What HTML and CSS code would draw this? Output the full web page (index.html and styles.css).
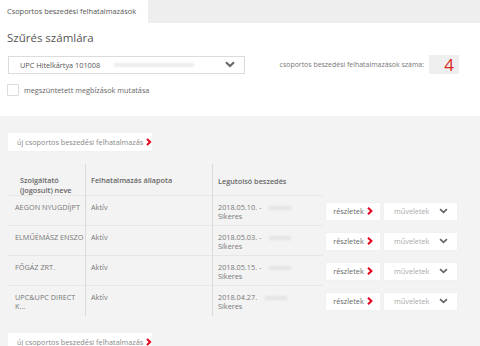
FILE: index.html
```html
<!DOCTYPE html>
<html lang="hu">
<head>
<meta charset="utf-8">
<link rel="stylesheet" href="styles.css">
</head>
<body>
<div class="tabs"><div class="tab">Csoportos beszedési felhatalmazások</div></div>
<section class="filter">
  <h2 class="title">Szűrés számlára</h2>
  <div class="filter-row">
    <div class="select">
      <span class="select-text">UPC Hitelkártya 101008<span class="blur wide"></span></span>
      <svg class="chev" width="10" height="7" viewBox="0 0 10 7"><path d="M1 1.2 L5 5 L9 1.2" fill="none" stroke="#666" stroke-width="2"/></svg>
    </div>
    <div class="count">
      <span class="count-label">csoportos beszedési felhatalmazások száma:</span>
      <span class="count-box">4</span>
    </div>
  </div>
  <label class="check"><span class="box"></span>megszüntetett megbízások mutatása</label>
</section>
<section class="list">
  <button class="new">új csoportos beszedési felhatalmazás <svg class="arr" width="6" height="8" viewBox="0 0 6 8"><path d="M1 0.8 L4.4 4 L1 7.2" fill="none" stroke="#e2001a" stroke-width="2"/></svg></button>
  <div class="table">
    <div class="tr head">
      <div class="c1">Szolgáltató<br>(jogosult) neve</div>
      <div class="c2">Felhatalmazás állapota</div>
      <div class="c3">Legutolsó beszedés</div>
      <div class="c4"></div>
    </div>
    <div class="tr">
      <div class="c1">AEGON NYUGDÍJPT</div>
      <div class="c2">Aktív</div>
      <div class="c3">2018.05.10. -<span class="blur"></span><br>Sikeres</div>
      <div class="c4 actions"><button class="btn det">részletek <svg class="arr" width="6" height="8" viewBox="0 0 6 8"><path d="M1 0.8 L4.4 4 L1 7.2" fill="none" stroke="#e2001a" stroke-width="2"/></svg></button><button class="btn ops"><span>műveletek</span><svg width="9" height="6" viewBox="0 0 10 7"><path d="M1 1.2 L5 5 L9 1.2" fill="none" stroke="#666" stroke-width="2"/></svg></button></div>
    </div>
    <div class="tr">
      <div class="c1">ELMŰÉMÁSZ ENSZO</div>
      <div class="c2">Aktív</div>
      <div class="c3">2018.05.03. -<span class="blur"></span><br>Sikeres</div>
      <div class="c4 actions"><button class="btn det">részletek <svg class="arr" width="6" height="8" viewBox="0 0 6 8"><path d="M1 0.8 L4.4 4 L1 7.2" fill="none" stroke="#e2001a" stroke-width="2"/></svg></button><button class="btn ops"><span>műveletek</span><svg width="9" height="6" viewBox="0 0 10 7"><path d="M1 1.2 L5 5 L9 1.2" fill="none" stroke="#666" stroke-width="2"/></svg></button></div>
    </div>
    <div class="tr">
      <div class="c1">FŐGÁZ ZRT.</div>
      <div class="c2">Aktív</div>
      <div class="c3">2018.05.15. -<span class="blur"></span><br>Sikeres</div>
      <div class="c4 actions"><button class="btn det">részletek <svg class="arr" width="6" height="8" viewBox="0 0 6 8"><path d="M1 0.8 L4.4 4 L1 7.2" fill="none" stroke="#e2001a" stroke-width="2"/></svg></button><button class="btn ops"><span>műveletek</span><svg width="9" height="6" viewBox="0 0 10 7"><path d="M1 1.2 L5 5 L9 1.2" fill="none" stroke="#666" stroke-width="2"/></svg></button></div>
    </div>
    <div class="tr last">
      <div class="c1">UPC&amp;UPC DIRECT<br>K...</div>
      <div class="c2">Aktív</div>
      <div class="c3">2018.04.27.<span class="blur"></span><br>Sikeres</div>
      <div class="c4 actions"><button class="btn det">részletek <svg class="arr" width="6" height="8" viewBox="0 0 6 8"><path d="M1 0.8 L4.4 4 L1 7.2" fill="none" stroke="#e2001a" stroke-width="2"/></svg></button><button class="btn ops"><span>műveletek</span><svg width="9" height="6" viewBox="0 0 10 7"><path d="M1 1.2 L5 5 L9 1.2" fill="none" stroke="#666" stroke-width="2"/></svg></button></div>
    </div>
  </div>
  <button class="new">új csoportos beszedési felhatalmazás <svg class="arr" width="6" height="8" viewBox="0 0 6 8"><path d="M1 0.8 L4.4 4 L1 7.2" fill="none" stroke="#e2001a" stroke-width="2"/></svg></button>
</section>
</body>
</html>
```

FILE: styles.css
```css
* { box-sizing: border-box; }
html, body { margin: 0; padding: 0; }
body {
  font-family: "Open Sans", "Noto Sans", sans-serif;
  font-size: 7.3px;
  color: #777;
  background: #f3f3f3;
  width: 480px;
  height: 346px;
  overflow: hidden;
}
.tabs { background: #eeeeee; height: 23px; display: flex; }
.tab {
  background: #fff;
  width: 148px;
  padding: 0 7px;
  line-height: 23px;
  font-size: 7.4px;
  color: #555;
  white-space: nowrap;
}
.filter { background: #fff; height: 93px; padding: 8px 8px 0 8px; }
.title { margin: 0 0 0 -1px; font-weight: 400; font-size: 11.5px; line-height: 14px; color: #555; }
.filter-row { display: flex; align-items: center; justify-content: space-between; margin-top: 10px; margin-right: 13px; }
.select {
  width: 237px; height: 18px;
  border: 1px solid #dcdcdc;
  display: flex; align-items: center; justify-content: space-between;
  padding: 0 9px 0 11px;
  color: #555;
}
.select-text { white-space: nowrap; display: flex; align-items: center; }
.blur {
  display: inline-block; width: 22px; height: 4px; margin-left: 8px;
  background: #e4e4e4; filter: blur(1.2px); vertical-align: middle;
}
.blur.wide { width: 80px; margin-left: 14px; background: #ececec; }
.chev { display: block; }
.count { display: flex; align-items: center; gap: 5px; }
.count-label { color: #777; font-size: 6.95px; }
.count-box {
  width: 30px; height: 19px; background: #efefef;
  color: #d9261c; font-size: 17px; line-height: 19px; text-align: right; padding-right: 5px;
}
.check { display: flex; align-items: center; gap: 5px; margin-top: 10px; margin-left: -1px; color: #666; }
.box { width: 12px; height: 12px; border: 1px solid #dcdcdc; background: #fff; border-radius: 1px; }
.list { padding: 17px 8px 0 8px; }
.new {
  display: flex; align-items: center; gap: 3px;
  height: 18px; width: 144px;
  border: 0; background: #fff;
  font-family: inherit; font-size: 7.3px; color: #888;
  padding: 0 0 0 9px; margin: 0; white-space: nowrap;
  box-shadow: 0 0 1px rgba(0,0,0,0.06);
}
.arr { display: block; }
.table { margin-top: 13px; margin-bottom: 17px; }
.tr { display: grid; grid-template-columns: 78px 127px 110px 137px; }
.tr > div { border-bottom: 1px solid #e6e6e6; height: 30px; padding-top: 7px; line-height: 9px; white-space: nowrap; }
.head > div { height: 32px; padding-top: 11px; font-weight: 600; color: #666; line-height: 10px; }
.tr > .c1 { padding-left: 7px; border-right: 1px solid #dadada; }
.head > .c1 { padding-left: 12px; }
.tr > .c2 { padding-left: 5px; border-right: 1px solid #dadada; }
.tr > .c3 { padding-left: 5px; line-height: 8.5px; }
.head > .c3 { padding-top: 13px; }
.tr > .c4 { border-bottom: 0; }
.last > div { border-bottom: 0; }
.actions { display: flex; align-items: center; gap: 4px; padding-left: 3px; padding-top: 0 !important; }
.btn {
  height: 17px; border: 0; background: #fff; margin: 0; padding: 0;
  font-family: inherit; font-size: 7.3px; color: #666;
  display: flex; align-items: center;
  box-shadow: 0 0 1px rgba(0,0,0,0.08);
}
.det { width: 54px; justify-content: center; gap: 3px; }
.ops { width: 73px; justify-content: space-between; padding: 0 9px 0 10px; color: #aaa; }
.ops svg { display: block; }
```
